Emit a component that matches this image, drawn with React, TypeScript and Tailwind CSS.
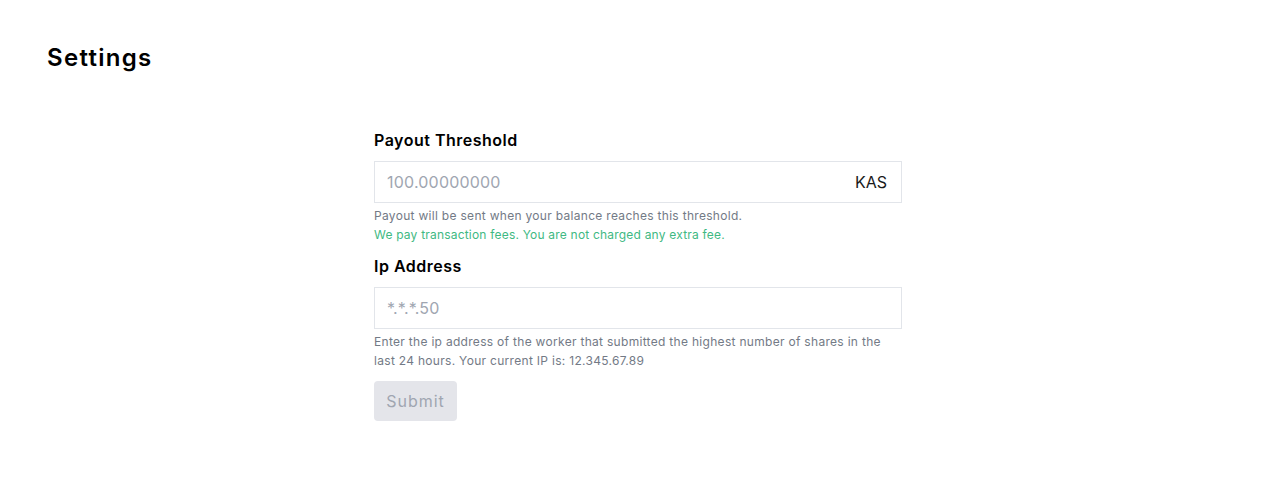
import React from "react";

const font = { fontFamily: 'Inter, "DejaVu Sans", sans-serif' };

const App = () => {
  return (
    <div
      className="min-h-[484px] w-full bg-white px-[47px] pt-[42px] text-black"
      style={font}
    >
      <h1 className="text-[24px] leading-8 font-semibold tracking-[1.3px]">Settings</h1>

      <form
        onSubmit={(e) => e.preventDefault()}
        className="mx-auto mt-[54px] flex w-[528px] flex-col"
      >
        <label
          htmlFor="threshold"
          className="text-[16px] leading-6 font-semibold tracking-[0.5px]"
        >
          Payout Threshold
        </label>
        <div className="mt-[9px] flex h-[42px] items-center border border-[#e2e5ea] px-3">
          <input
            id="threshold"
            type="text"
            placeholder="100.00000000"
            className="w-full text-[16px] tracking-[0.2px] outline-none placeholder:text-[#a0a6b1]"
          />
          <span className="pr-[2px] text-[16px] text-[#1a1a1a]">KAS</span>
        </div>
        <p className="mt-[3px] text-[12px] leading-[19px] tracking-[0.3px] text-[#737a86]">
          Payout will be sent when your balance reaches this threshold.
        </p>
        <p className="text-[12px] leading-[19px] tracking-[0.2px] text-[#3fb983]">
          We pay transaction fees. You are not charged any extra fee.
        </p>

        <label
          htmlFor="ip"
          className="mt-[10px] text-[16px] leading-6 font-semibold tracking-[0.5px]"
        >
          Ip Address
        </label>
        <div className="mt-[9px] flex h-[42px] items-center border border-[#e2e5ea] px-3">
          <input
            id="ip"
            type="text"
            placeholder="*.*.*.50"
            className="w-full text-[16px] tracking-[0.2px] outline-none placeholder:text-[#a0a6b1]"
          />
        </div>
        <p className="mt-[3px] text-[12px] leading-[19px] tracking-[0.3px] text-[#737a86]">
          Enter the ip address of the worker that submitted the highest number of shares in the
          last 24 hours. Your current IP is: 12.345.67.89
        </p>

        <button
          type="submit"
          disabled
          className="mt-[11px] h-10 w-[83px] rounded bg-[#e4e5ea] text-[16px] tracking-[1px] text-[#a0a6b1]"
        >
          Submit
        </button>
      </form>
    </div>
  );
};

export default App;
